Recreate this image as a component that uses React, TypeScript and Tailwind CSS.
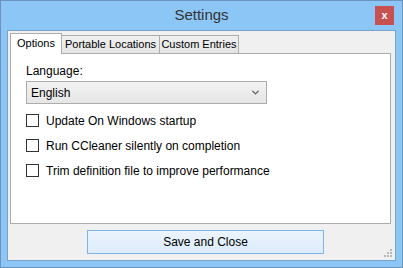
import { ChevronDown } from 'lucide-react';

const font = { fontFamily: '"Liberation Sans", "Noto Sans", sans-serif' };

const options = [
  'Update On Windows startup',
  'Run CCleaner silently on completion',
  'Trim definition file to improve performance',
];

function Tab({ label, active, width }: { label: string; active?: boolean; width: string }) {
  return active ? (
    <div className={`relative z-10 -mr-px flex h-[21px] shrink-0 ${width} items-center justify-center whitespace-nowrap border border-b-0 border-[#acacac] bg-white pb-[2px] text-[11px] text-black`}>
      {label}
    </div>
  ) : (
    <div className={`mt-[2px] -mr-px flex h-[18px] shrink-0 ${width} items-center justify-center whitespace-nowrap border border-b-0 border-[#acacac] bg-gradient-to-b from-[#f0f0f0] to-[#e5e5e5] text-[11px] text-black`}>
      {label}
    </div>
  );
}

export default function App() {
  return (
    <div style={font} className="flex h-[268px] w-[403px] flex-col border border-[#6b93bb] bg-[#8cc6f6]">
      {/* Title bar */}
      <div className="relative flex h-[29px] shrink-0 items-center justify-center">
        <span className="text-[15px] text-[#333]">Settings</span>
        <div className="absolute right-[8px] top-[5px] flex h-[19px] w-[19px] items-center justify-center bg-[#c75050] text-[11px] font-bold leading-none text-white">
          x
        </div>
      </div>

      {/* Client */}
      <div className="mx-[6px] flex h-[231px] flex-col border border-[#7aa3c9] bg-[#f0f0f0] pt-[2px]">
        <div className="ml-[2px] flex items-start">
          <Tab label="Options" active width="w-[52px]" />
          <Tab label="Portable Locations" width="w-[99px]" />
          <Tab label="Custom Entries" width="w-[80px]" />
        </div>

        <div className="-mt-px ml-[2px] mr-[4px] flex h-[171px] flex-col border border-[#acacac] bg-white pl-[15px] pt-[10px]">
          <span className="text-[12px] leading-[15px] text-black">Language:</span>
          <div className="mt-[2px] flex h-[23px] w-[241px] items-center justify-between border border-[#acacac] bg-gradient-to-b from-[#f2f2f2] to-[#e6e6e6] pl-[4px] pr-[5px]">
            <span className="text-[12px] text-black">English</span>
            <ChevronDown size={11} strokeWidth={3} className="text-[#606060]" />
          </div>
          <div className="mt-[10px] flex flex-col gap-[12px]">
            {options.map((o) => (
              <div key={o} className="flex h-[13px] items-center gap-[7px]">
                <div className="h-[13px] w-[13px] shrink-0 border border-[#333] bg-white" />
                <span className="text-[12px] text-black">{o}</span>
              </div>
            ))}
          </div>
        </div>

        <div className="relative flex flex-1 items-start justify-center pl-[8px] pt-[6px]">
          <button className="flex h-[24px] w-[237px] items-center justify-center border border-[#7eb4ea] bg-gradient-to-b from-[#ecf4fc] to-[#dcecfc] text-[12px] text-black">
            Save and Close
          </button>
          <svg className="absolute bottom-[2px] right-[2px]" width="9" height="9" viewBox="0 0 9 9">
            <g fill="#b8b8b8">
              <rect x="6" y="0" width="2" height="2" />
              <rect x="3" y="3" width="2" height="2" />
              <rect x="6" y="3" width="2" height="2" />
              <rect x="0" y="6" width="2" height="2" />
              <rect x="3" y="6" width="2" height="2" />
              <rect x="6" y="6" width="2" height="2" />
            </g>
          </svg>
        </div>
      </div>
    </div>
  );
}
